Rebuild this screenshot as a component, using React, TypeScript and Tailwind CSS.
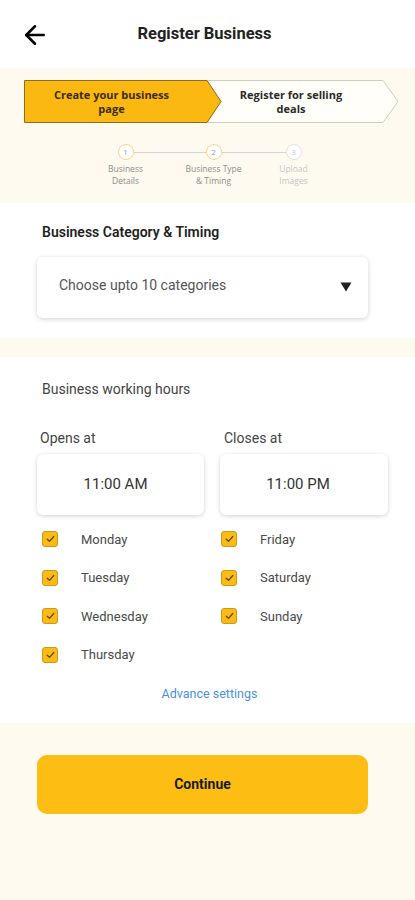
import { ArrowLeft } from 'lucide-react';

const leftDays = ['Monday', 'Tuesday', 'Wednesday', 'Thursday'];
const rightDays = ['Friday', 'Saturday', 'Sunday'];

const steps = [
  { n: '1', label: ['Business', 'Details'], active: true },
  { n: '2', label: ['Business Type', '& Timing'], active: true },
  { n: '3', label: ['Upload', 'Images'], active: false },
];

function DayCheck({ day }: { day: string }) {
  return (
    <div className="flex items-center h-[38.5px]">
      <div className="w-4 h-4 rounded-[3px] bg-[#fbbb12] border border-[#c99a1c] flex items-center justify-center">
        <svg width="9" height="8" viewBox="0 0 9 8" fill="none">
          <path d="M1.2 4.2 L3.5 6.3 L7.8 1.5" stroke="#5a4410" strokeWidth="1.2" strokeLinecap="round" strokeLinejoin="round" />
        </svg>
      </div>
      <span className="ml-[23px] text-[13px] text-[#4a4a4a]">{day}</span>
    </div>
  );
}

export default function App() {
  return (
    <div className="w-[415px] h-[900px] bg-[#fffaef] font-['Roboto',sans-serif] overflow-hidden">
      {/* Header */}
      <div className="h-[68px] bg-white flex items-center relative">
        <ArrowLeft className="absolute left-[20px] top-[20px] w-[30px] h-[30px] text-black" strokeWidth={2} />
        <h1 className="w-full text-center text-[16.5px] font-bold text-[#222] pr-[6px]">Register Business</h1>
      </div>

      {/* Progress */}
      <div className="h-[135px] pt-[12px]">
        <div className="relative mx-[24px] h-[43px] w-[375px]">
          <svg className="absolute inset-0" width="375" height="43" viewBox="0 0 375 43">
            <path d="M183 0.5 L359 0.5 L374 21.5 L359 42.5 L183 42.5 L197 21.5 Z" fill="#fffef9" stroke="#d2ccbd" strokeWidth="1" />
            <path d="M0.5 0.5 L183 0.5 L197 21.5 L183 42.5 L0.5 42.5 Z" fill="#fbb811" stroke="#8d6e1c" strokeWidth="1" />
          </svg>
          <div className="relative flex h-full font-['Open_Sans',sans-serif] text-[11px] font-bold leading-[14px]">
            <div className="w-[175px] flex items-center justify-center text-center text-[#3a2c06]">
              Create your business<br />page
            </div>
            <div className="flex-1 flex items-center justify-center text-center text-[#2a2a2a] pr-[16px]">
              Register for selling<br />deals
            </div>
          </div>
        </div>

        <div className="flex justify-center mt-[21px] ml-[4px] font-['Open_Sans',sans-serif]">
          {steps.map((s, i) => (
            <div key={s.n} className="flex items-start">
              <div className="flex flex-col items-center w-[50px]">
                <div
                  className={`w-[16px] h-[16px] rounded-full border flex items-center justify-center text-[8px] bg-white ${
                    s.active ? 'border-[#f6d68f] text-[#9a9a9a]' : 'border-[#e2e2e2] text-[#c4c4c4]'
                  }`}
                >
                  {s.n}
                </div>
                <div
                  className={`mt-[3px] text-[8.5px] leading-[12px] text-center whitespace-nowrap ${
                    s.active ? 'text-[#8e8e8e]' : 'text-[#c6c6c6]'
                  }`}
                >
                  {s.label[0]}
                  <br />
                  {s.label[1]}
                </div>
              </div>
              {i < steps.length - 1 && (
                <div className={`h-px bg-[#d4d4d4] mt-[8px] -mx-[17px] ${i === 0 ? 'w-[72px]' : 'w-[64px]'}`} />
              )}
            </div>
          ))}
        </div>
      </div>

      {/* Category */}
      <div className="bg-white h-[135px] pt-[19px]">
        <h2 className="ml-[42px] text-[14px] font-semibold text-[#1e1e1e] leading-[20px]">Business Category &amp; Timing</h2>
        <div className="mt-[15px] ml-[37px] w-[331px] h-[61px] rounded-[6px] bg-white shadow-[0_1px_5px_rgba(0,0,0,0.18)] flex items-center justify-between pl-[22px] pr-[16px] pb-[5px]">
          <span className="text-[14px] text-[#555]">Choose upto 10 categories</span>
          <svg width="12" height="10" viewBox="0 0 12 10" className="mt-[3px]">
            <path d="M0.5 0.5 L11.5 0.5 L6 9.5 Z" fill="#222" />
          </svg>
        </div>
      </div>

      <div className="h-[19px]" />

      {/* Working hours */}
      <div className="bg-white h-[366px] pt-[22px]">
        <p className="ml-[42px] text-[14px] text-[#444] leading-[20px]">Business working hours</p>

        <div className="mt-[29px] ml-[37px] flex gap-[16px]">
          <div className="w-[167px]">
            <p className="ml-[3px] text-[14px] text-[#444] leading-[20px]">Opens at</p>
            <div className="mt-[6px] h-[61px] rounded-[6px] bg-white shadow-[0_1px_4px_rgba(0,0,0,0.18)] flex items-center justify-center pr-[10px] text-[15px] text-[#333]">
              11:00 AM
            </div>
          </div>
          <div className="w-[168px]">
            <p className="ml-[4px] text-[14px] text-[#444] leading-[20px]">Closes at</p>
            <div className="mt-[6px] h-[61px] rounded-[6px] bg-white shadow-[0_1px_4px_rgba(0,0,0,0.18)] flex items-center justify-center pr-[12px] text-[15px] text-[#333]">
              11:00 PM
            </div>
          </div>
        </div>

        <div className="mt-[5px] ml-[42px] flex">
          <div className="w-[179px]">
            {leftDays.map((d) => (
              <DayCheck key={d} day={d} />
            ))}
          </div>
          <div>
            {rightDays.map((d) => (
              <DayCheck key={d} day={d} />
            ))}
          </div>
        </div>

        <p className="mt-[11px] text-center text-[12.5px] text-[#4a90e2] ml-[4px]">Advance settings</p>
      </div>

      {/* Continue */}
      <div className="pt-[32px]">
        <button className="ml-[37px] w-[331px] h-[59px] rounded-[10px] bg-[#fdbd13] text-[14px] font-bold text-[#1a1a1a]">
          Continue
        </button>
      </div>
    </div>
  );
}
